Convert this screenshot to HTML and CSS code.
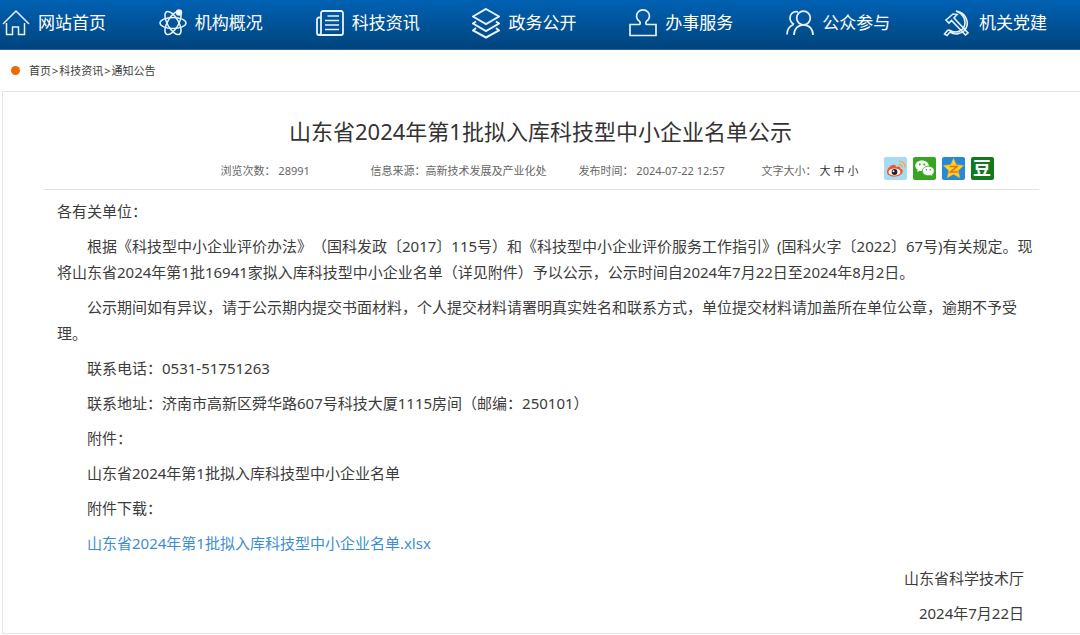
FILE: index.html
```html
<!DOCTYPE html>
<html lang="zh-CN">
<head>
<meta charset="utf-8">
<meta name="viewport" content="width=device-width, initial-scale=1">
<title>山东省2024年第1批拟入库科技型中小企业名单公示</title>
<link rel="stylesheet" href="styles.css">
</head>
<body>
<nav class="nav" aria-label="主导航">
  <a class="nav-item" href="#">
    <svg class="nav-icon" viewBox="0 0 28 28"><path d="M1 15 14 2l13 13M4.500 14v11.500h6V18h6v7.500h6V14" /></svg>
    <span>网站首页</span></a>
  <a class="nav-item" href="#">
    <svg class="nav-icon" viewBox="0 0 28 28"><ellipse cx="14" cy="14" rx="13" ry="5.500"/><ellipse cx="14" cy="14" rx="13" ry="5.500" transform="rotate(60 14 14)"/><ellipse cx="14" cy="14" rx="13" ry="5.500" transform="rotate(120 14 14)"/><circle class="solid" cx="20" cy="3.500" r="2.500"/></svg>
    <span>机构概况</span></a>
  <a class="nav-item" href="#">
    <svg class="nav-icon" viewBox="0 0 28 28"><path stroke-width="1.800" d="M5 8.500H3a2 2 0 0 0-2 2V24a2 2 0 0 0 2 2h22a2 2 0 0 0 2-2V4a2 2 0 0 0-2-2H7a2 2 0 0 0-2 2v19q0 3-2 3"/><path d="M11.500 7H23M9 11.500h14M9 16h14M9 20.500h14"/></svg>
    <span>科技资讯</span></a>
  <a class="nav-item" href="#">
    <svg class="nav-icon tall" viewBox="0 0 28 32"><path stroke-width="2" d="M14 2 27 9.500 14 17 1 9.500zM4 14.500l-3 2L14 24l13-7.500-3-2M4 21l-3 2.500L14 30.500l13-7-3-2.500"/></svg>
    <span>政务公开</span></a>
  <a class="nav-item" href="#">
    <svg class="nav-icon" viewBox="0 0 28 28"><path stroke-width="1.700" d="M1 15.500h9c1.500 0 1.500-2 .5-3.200a6.500 6.200 0 1 1 7 0c-1 1.200-1 3.200.5 3.200h9v11H1z"/></svg>
    <span>办事服务</span></a>
  <a class="nav-item" href="#">
    <svg class="nav-icon" viewBox="0 0 28 28"><path stroke-width="1.700" d="M8 26c0-6 4-10.200 9.500-10.200S27 20 27 26M12 2.800C7 1.800 4 5 4 9c0 3 1.500 5 4 6.500M1 25.500c0-4.500 2-8 6.500-10"/><circle stroke-width="1.700" cx="17.500" cy="9" r="6.800"/></svg>
    <span>公众参与</span></a>
  <a class="nav-item" href="#">
    <svg class="nav-icon" viewBox="0 0 28 28"><path stroke-width="1.600" d="M13 2c10 1.500 14.500 12 8.500 19.500-4 4-10 4.500-14.500 1.500l-3 3.500-2.500-1.500 3-3.500 1.500-.5c9 5 16-.5 16-7.500 0-5-3-9-9-11.500zM3 11l7-6 4 .5-3 3.500 14 15-2.500 2-14-14.500-2.500 2.500z"/></svg>
    <span>机关党建</span></a>
</nav>

<div class="crumbs"><span class="dot"></span><a href="#">首页</a><span>&gt;</span><a href="#">科技资讯</a><span>&gt;</span><a href="#">通知公告</a></div>

<main class="panel">
  <header class="head">
    <h1 class="title">山东省2024年第1批拟入库科技型中小企业名单公示</h1>
    <div class="meta">
      <span>浏览次数： 28991</span>
      <span>信息来源：高新技术发展及产业化处</span>
      <span>发布时间： 2024-07-22 12:57</span>
      <span class="sizes">文字大小： <button class="size" type="button">大</button><button class="size" type="button">中</button><button class="size" type="button">小</button></span>
      <span class="share">
        <a href="#" class="share-link" aria-label="新浪微博"><svg class="share-icon" viewBox="0 0 23 23"><rect width="23" height="23" rx="2" fill="#a5dcf3"/><path fill="#f0582a" d="M3 15c0-4 5-8 8-7 1 .4 1 1.500.8 2 2-1 5-.7 4.500 1.500 2 .5 3 2 2.200 4-1 2.500-4.500 4-8.500 4S3 17.800 3 15z"/><ellipse cx="10.500" cy="15" rx="6" ry="3.600" fill="#fff"/><circle cx="10.500" cy="15" r="2.900" fill="#222"/><circle cx="9.500" cy="14.200" r="1" fill="#fff"/><path fill="none" stroke="#f2ad45" stroke-width="1.600" d="M15 7.500c2-.3 3.300 1 3 3M15 4.500c4-.5 6.500 2.500 5.800 6"/></svg></a>
        <a href="#" class="share-link" aria-label="微信"><svg class="share-icon" viewBox="0 0 23 23"><rect width="23" height="23" rx="2" fill="#36a51f"/><path fill="#fff" d="M9 3.500c4 0 6.800 2.300 6.800 5.300S13 14 9 14c-.8 0-1.500 0-2.200-.3L4 15l.8-2.300C3.200 11.800 2.300 10.500 2.300 8.800c0-3 2.700-5.300 6.700-5.300z"/><path fill="#fff" stroke="#36a51f" stroke-width=".8" d="M15.300 9.300c3.400 0 6 2 6 4.700 0 1.500-.8 2.700-2 3.500l.6 2-2.400-1.100c-4.500 1-8.200-1-8.200-4.400 0-2.700 2.600-4.700 6-4.700z"/><g fill="#36a51f"><circle cx="6.800" cy="7.500" r="1"/><circle cx="11.300" cy="7.500" r="1"/><circle cx="13.300" cy="12.800" r=".8"/><circle cx="17.300" cy="12.800" r=".8"/></g></svg></a>
        <a href="#" class="share-link" aria-label="QQ空间"><svg class="share-icon" viewBox="0 0 23 23"><rect width="23" height="23" rx="2" fill="#2589d8"/><path fill="#ffd02c" stroke="#f6b11a" stroke-width=".6" d="m11.500 1.500 2.800 6.300 7.200.8-5.300 4.900 1.500 7.200-6.200-3.500-6.200 3.500 1.500-7.200-5.300-4.900 7.200-.8z"/><path fill="none" stroke="#e8720c" stroke-width="1.600" d="M7.500 9.500h7.500l-6.500 5.500h7.500"/></svg></a>
        <a href="#" class="share-link douban" aria-label="豆瓣">豆</a>
      </span>
    </div>
  </header>
  <article class="body">
    <p class="para flush">各有关单位：</p>
    <p class="para">根据《科技型中小企业评价办法》（国科发政〔2017〕115号）和《科技型中小企业评价服务工作指引》(国科火字〔2022〕67号)有关规定。现将山东省2024年第1批16941家拟入库科技型中小企业名单（详见附件）予以公示，公示时间自2024年7月22日至2024年8月2日。</p>
    <p class="para">公示期间如有异议，请于公示期内提交书面材料，个人提交材料请署明真实姓名和联系方式，单位提交材料请加盖所在单位公章，逾期不予受理。</p>
    <p class="para">联系电话：0531-51751263</p>
    <p class="para">联系地址：济南市高新区舜华路607号科技大厦1115房间（邮编：250101）</p>
    <p class="para">附件：</p>
    <p class="para">山东省2024年第1批拟入库科技型中小企业名单</p>
    <p class="para">附件下载：</p>
    <p class="para"><a class="file" href="#">山东省2024年第1批拟入库科技型中小企业名单.xlsx</a></p>
    <p class="para sign">山东省科学技术厅</p>
    <p class="para sign">2024年7月22日</p>
  </article>
</main>
</body>
</html>
```
FILE: styles.css
```css
* { box-sizing: border-box; }
body {
  margin: 0;
  background: #fff;
  color: #3c3c3c;
  font-family: "Noto Sans", "Noto Sans CJK SC", sans-serif;
  text-spacing-trim: space-all;
}
a { color: inherit; text-decoration: none; }

.nav {
  display: flex;
  justify-content: space-between;
  align-items: center;
  height: 50px;
  padding: 0 33px 4px 2px;
  background: linear-gradient(#0061b2, #00447d);
  border-bottom: 1px solid #2a6499;
}
.nav-item {
  display: flex;
  align-items: center;
  gap: 8px;
  color: #fff;
  font-size: 17px;
  line-height: 24px;
  white-space: nowrap;
}
.nav-icon {
  width: 28px;
  height: 28px;
  fill: none;
  stroke: #e8f1fa;
  stroke-width: 1.5;
}
.nav-icon.tall { height: 32px; }
.nav-icon .solid { fill: #fff; }

.crumbs {
  display: flex;
  align-items: center;
  gap: 1px;
  height: 41px;
  padding-left: 11px;
  font-size: 11px;
  line-height: 16px;
}
.dot {
  width: 9px;
  height: 9px;
  margin-right: 8px;
  border-radius: 50%;
  background: #ee6a00;
}

.panel {
  margin-left: 2px;
  padding: 22px 41px 7px;
  border: 1px solid #e4e4e4;
  border-right: 0;
}
.head { border-bottom: 1px solid #e2e2e2; }
.title {
  margin: 0;
  padding-right: 2px;
  color: #333;
  font-size: 22px;
  font-weight: 400;
  line-height: 34px;
  text-align: center;
}
.meta {
  display: grid;
  grid-template-columns: 150px 208px 183px 122px auto;
  justify-content: center;
  align-items: center;
  height: 41px;
  padding: 2px 0 0 131px;
  color: #666;
  font-size: 11px;
  white-space: nowrap;
}
.sizes { display: flex; gap: 3px; }
.size {
  padding: 0;
  border: 0;
  background: none;
  color: #333;
  font: inherit;
}
.share { display: flex; gap: 6px; padding-bottom: 3px; }
.share-link { width: 23px; height: 23px; }
.share-icon { display: block; width: 23px; height: 23px; }
.douban {
  border-radius: 2px;
  background: #12791f;
  color: #fff;
  font-size: 18px;
  font-weight: 700;
  line-height: 22px;
  text-align: center;
}

.body {
  padding: 8px 0 0 13px;
  font-size: 15px;
  line-height: 26px;
}
.para { margin: 0 0 9px; text-indent: 2em; }
.para:last-child { margin-bottom: 0; }
.flush { text-indent: 0; }
.file { color: #3c8dd6; }
.sign { padding-right: 15px; text-align: right; text-indent: 0; }
```
